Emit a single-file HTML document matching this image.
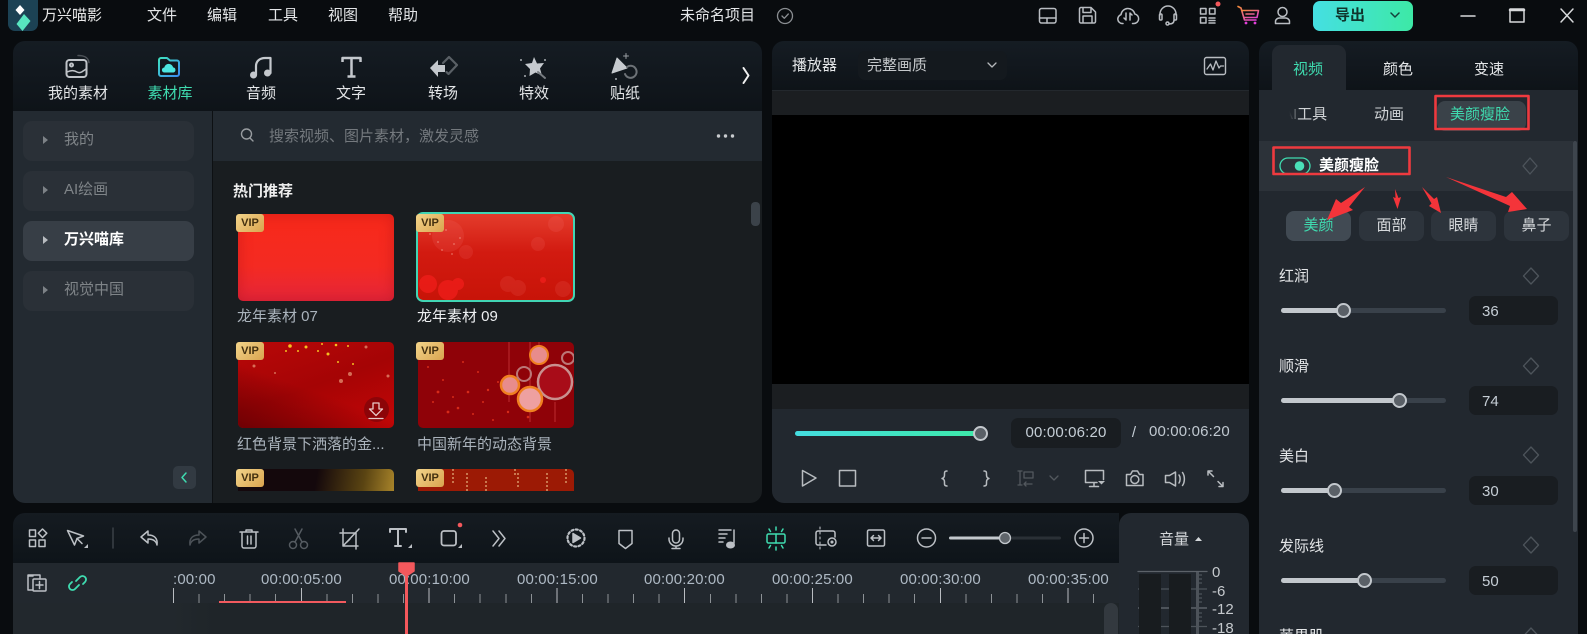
<!DOCTYPE html>
<html lang="zh"><head><meta charset="utf-8"><title>万兴喵影</title>
<style>
*{box-sizing:border-box;margin:0;padding:0}
html{width:1587px;height:634px;overflow:hidden;background:#090c0f}
body{position:relative;width:1587px;height:634px;overflow:hidden;background:#090c0f;font-family:"Liberation Sans","Noto Sans CJK SC",sans-serif;color:#e4e6e8;font-size:15px}
.b{position:absolute}
.l,.c{position:absolute;white-space:nowrap;line-height:20px;height:20px;margin-top:-10px}
.c{transform:translateX(-50%)}
.g{color:#7f8488}.w{color:#fff;font-weight:700}.tl{color:#3fdcb0}
.nav{background:linear-gradient(#151c23,#0e1318)}
.side{left:23px;width:171px;height:40px;border-radius:9px;background:#2a3037}
.tri{position:absolute;width:0;height:0;border-left:5px solid #7d8287;border-top:4px solid transparent;border-bottom:4px solid transparent;margin-top:-4px}
.vip{position:absolute;width:28px;height:18px;border-radius:3px;background:linear-gradient(135deg,#f3d48a,#d9a44f);color:#43300f;font:700 11px/18px "Liberation Sans",sans-serif;text-align:center}
.th{position:absolute;border-radius:5px;overflow:hidden}
.pill{position:absolute;top:211px;height:30px;width:65px;border-radius:8px;background:#2d343c;text-align:center;line-height:30px;color:#d5d8db}
.inp{position:absolute;left:1469px;width:89px;height:29px;border-radius:7px;background:#191d21;color:#c6ced6;line-height:31px;padding-left:13px}
.tr{position:absolute;left:1281px;width:165px;height:5px;border-radius:3px;background:#39414a}
.fill{position:absolute;left:1281px;height:5px;border-radius:3px;background:#c3c8cd}
.kn{position:absolute;width:15px;height:15px;border-radius:50%;background:#5a6067;border:2.5px solid #c3c8cd}
.ru{position:absolute;top:570px;line-height:20px;color:#aeb9c4;white-space:nowrap;letter-spacing:.15px}
</style></head><body>

<!-- Logo -->
<div class="b" style="left:8px;top:0;width:30px;height:31px;border-radius:0 0 7px 7px;background:#1c4254"></div>
<div class="l" style="left:42px;top:16px;color:#e8e8e8">万兴喵影</div>
<div class="l" style="left:147px;top:16px">文件</div>
<div class="l" style="left:207px;top:16px">编辑</div>
<div class="l" style="left:268px;top:16px">工具</div>
<div class="l" style="left:328px;top:16px">视图</div>
<div class="l" style="left:388px;top:16px">帮助</div>
<div class="l" style="left:680px;top:16px">未命名项目</div>

<!-- Export -->
<div class="b" style="left:1313px;top:1px;width:100px;height:30px;border-radius:7px;background:linear-gradient(90deg,#45dfe2,#3de9a6)"></div>
<div class="l" style="left:1335px;top:16px;color:#10352c;font-weight:700">导出</div>

<!-- Library panel -->
<div class="b nav" style="left:13px;top:41px;width:749px;height:70px;border-radius:12px 12px 0 0"></div>
<div class="b" style="left:13px;top:111px;width:199px;height:392px;background:#232a31;border-radius:0 0 0 12px"></div>
<div class="b" style="left:212px;top:111px;width:1px;height:392px;background:#0d1013"></div>
<div class="b" style="left:213px;top:111px;width:549px;height:50px;background:#232a31"></div>
<div class="b" style="left:213px;top:161px;width:549px;height:342px;background:#191d20;border-radius:0 0 12px 0"></div>

<div class="c" style="left:78px;top:94px">我的素材</div>
<div class="c tl" style="left:170px;top:94px">素材库</div>
<div class="c" style="left:261px;top:94px">音频</div>
<div class="c" style="left:351px;top:94px">文字</div>
<div class="c" style="left:443px;top:94px">转场</div>
<div class="c" style="left:534px;top:94px">特效</div>
<div class="c" style="left:625px;top:94px">贴纸</div>

<div class="b side" style="top:121px"></div><div class="tri" style="left:43px;top:140px"></div><div class="l g" style="left:64px;top:140px">我的</div>
<div class="b side" style="top:171px"></div><div class="tri" style="left:43px;top:190px"></div><div class="l g" style="left:64px;top:190px">AI绘画</div>
<div class="b side" style="top:221px;background:#373e46"></div><div class="tri" style="left:43px;top:240px;border-left-color:#b8bcc0"></div><div class="l w" style="left:64px;top:240px">万兴喵库</div>
<div class="b side" style="top:271px"></div><div class="tri" style="left:43px;top:290px"></div><div class="l g" style="left:64px;top:290px">视觉中国</div>
<div class="b" style="left:173px;top:466px;width:23px;height:23px;border-radius:5px;background:#323a42"></div>

<div class="l g" style="left:269px;top:137px;color:#74797e">搜索视频、图片素材，激发灵感</div>
<div class="l w" style="left:233px;top:192px;color:#eee">热门推荐</div>
<div class="b" style="left:751px;top:202px;width:9px;height:24px;border-radius:4px;background:#3b4249"></div>

<!-- Thumbs -->
<div class="th" style="left:238px;top:214px;width:156px;height:87px;background:linear-gradient(#f7291a,#f42a22 60%,#e5263a);box-shadow:inset 0 0 14px rgba(150,10,20,.35)"></div>
<div class="th" style="left:416px;top:212px;width:159px;height:90px;border:2px solid #41d5b4;border-radius:7px;background:linear-gradient(#e43c2c,#d21a10 45%,#c81408)">
<svg width="155" height="86"><g fill="#f88" opacity=".12"><circle cx="30" cy="22" r="16"/><circle cx="90" cy="70" r="8"/><circle cx="100" cy="74" r="8"/><circle cx="145" cy="75" r="8"/><circle cx="48" cy="38" r="7"/><circle cx="138" cy="10" r="8"/><circle cx="120" cy="30" r="7"/></g><g fill="#f22" opacity=".55"><circle cx="10" cy="70" r="9"/><circle cx="30" cy="76" r="10"/><circle cx="40" cy="70" r="6"/><circle cx="125" cy="66" r="3"/></g><g fill="#f9b8a8" opacity=".4"><circle cx="12" cy="20" r="1"/><circle cx="20" cy="28" r="1"/><circle cx="28" cy="16" r="1"/><circle cx="36" cy="30" r="1"/><circle cx="24" cy="36" r="1"/><circle cx="16" cy="12" r="1"/><circle cx="34" cy="40" r="1"/><circle cx="42" cy="24" r="1"/></g></svg></div>
<div class="th" style="left:238px;top:342px;width:156px;height:86px;background:linear-gradient(160deg,#b80808,#a50405 50%,#c40606 100%)">
<div style="position:absolute;inset:0;background:linear-gradient(20deg,#6e0004 0%,transparent 45%)"></div>
<svg width="156" height="86" style="position:absolute;left:0;top:0"><g fill="#f5c020"><circle cx="52" cy="4" r="1.8"/><circle cx="68" cy="5" r="1.5"/><circle cx="48" cy="9" r="1"/><circle cx="84" cy="2" r="1"/><circle cx="98" cy="3" r="1.3"/><circle cx="90" cy="12" r="1.500"/><circle cx="110" cy="4" r="1"/><circle cx="60" cy="9" r="1"/><circle cx="80" cy="9" r="1"/><circle cx="115" cy="22" r="1"/><circle cx="100" cy="20" r="1"/></g><g fill="#e99a7a" opacity=".7"><circle cx="128" cy="5" r="1.5"/><circle cx="112" cy="32" r="2"/><circle cx="103" cy="39" r="2"/><circle cx="150" cy="34" r="1.5"/><circle cx="16" cy="24" r="1.5"/><circle cx="37" cy="31" r="1"/></g></svg></div>
<div class="th" style="left:418px;top:342px;width:156px;height:86px;background:#8f0208">
<svg width="156" height="86"><g fill="#e8361e" opacity=".8"><circle cx="20" cy="50" r="1.4"/><circle cx="50" cy="50" r="1.300"/><circle cx="70" cy="48" r="1.200"/><circle cx="30" cy="70" r="1.400"/><circle cx="90" cy="70" r="1.200"/><circle cx="60" cy="30" r="1"/><circle cx="10" cy="25" r="1"/><circle cx="40" cy="66" r="1.300"/><circle cx="110" cy="75" r="1.300"/><circle cx="75" cy="78" r="1"/><circle cx="15" cy="60" r="1"/><circle cx="35" cy="55" r="1"/><circle cx="55" cy="72" r="1"/><circle cx="65" cy="60" r="1"/><circle cx="80" cy="40" r="1"/><circle cx="25" cy="38" r="1"/><circle cx="45" cy="20" r="1"/></g>
<g fill="none"><path d="M91 0V60M112 0V80M121 0V22M137 60V80" stroke="#e55" stroke-width="1" opacity=".5"/><circle cx="137" cy="40" r="17" fill="#a80c18" stroke="#c9908f" stroke-width="2.500"/><circle cx="92" cy="43" r="9" fill="#e88c8c" stroke="#f08020" stroke-width="2.500"/><circle cx="112" cy="57" r="12" fill="#eea0a0" stroke="#f08020" stroke-width="2.500"/><circle cx="121" cy="13" r="9" fill="#e88c8c" stroke="#f08020" stroke-width="2"/><circle cx="106" cy="32" r="7" stroke="#b77" stroke-width="2"/><circle cx="150" cy="16" r="6" stroke="#b77" stroke-width="2"/></g></svg></div>
<div class="th" style="left:238px;top:469px;width:156px;height:22px;border-radius:5px 5px 0 0;background:linear-gradient(100deg,#14080c 50%,#5a4412 80%,#a8842a)"></div>
<div class="th" style="left:418px;top:469px;width:156px;height:22px;border-radius:5px 5px 0 0;background:#9c1a05"><svg width="156" height="22"><g stroke="#dda070" stroke-width="2" stroke-dasharray="2 2" opacity=".7"><path d="M35 0V16M49 4V22M68 8V22M97 0V6M100 4V20M129 4V22M148 0V14"/></g></svg></div>
<div class="vip" style="left:236px;top:214px">VIP</div>
<div class="vip" style="left:416px;top:214px">VIP</div>
<div class="vip" style="left:236px;top:342px">VIP</div>
<div class="vip" style="left:416px;top:342px">VIP</div>
<div class="vip" style="left:236px;top:469px">VIP</div>
<div class="vip" style="left:416px;top:469px">VIP</div>
<div class="b" style="left:364px;top:397px;width:25px;height:25px;border-radius:50%;background:#8c0408"></div>
<div class="l" style="left:237px;top:317px;color:#aab3bc">龙年素材 07</div>
<div class="l" style="left:417px;top:317px;color:#eef0f2">龙年素材 09</div>
<div class="l" style="left:237px;top:445px;color:#aab3bc">红色背景下洒落的金...</div>
<div class="l" style="left:417px;top:445px;color:#aab3bc">中国新年的动态背景</div>

<!-- Player -->
<div class="b nav" style="left:772px;top:41px;width:477px;height:49px;border-radius:12px 12px 0 0"></div>
<div class="b" style="left:772px;top:90px;width:477px;height:25px;background:#1b1e21;border-top:1px solid #23282d"></div>
<div class="b" style="left:772px;top:115px;width:477px;height:269px;background:#000"></div>
<div class="b" style="left:772px;top:384px;width:477px;height:25px;background:#1b1e21"></div>
<div class="b" style="left:772px;top:409px;width:477px;height:94px;background:#22282f;border-radius:0 0 12px 12px"></div>
<div class="l" style="left:792px;top:66px">播放器</div>
<div class="b" style="left:858px;top:51px;width:149px;height:29px;border-radius:7px;background:#14191e"></div>
<div class="l" style="left:867px;top:66px;color:#c5c8cb">完整画质</div>
<div class="b" style="left:795px;top:431px;width:186px;height:5px;border-radius:3px;background:linear-gradient(90deg,#45dde0,#3de9a8)"></div>
<div class="kn" style="left:973px;top:426px"></div>
<div class="b" style="left:1011px;top:418px;width:110px;height:30px;border-radius:7px;background:#191d21"></div>
<div class="c" style="left:1066px;top:433px;color:#c5ced6;letter-spacing:.15px">00:00:06:20</div>
<div class="c" style="left:1134px;top:433px;color:#c5ced6">/</div>
<div class="l" style="left:1149px;top:432px;color:#c0c8d0;letter-spacing:.15px">00:00:06:20</div>

<!-- Right panel -->
<div class="b nav" style="left:1259px;top:41px;width:319px;height:49px;border-radius:12px 12px 0 0"></div>
<div class="b" style="left:1272px;top:45px;width:74px;height:45px;border-radius:9px 9px 0 0;background:#22282f"></div>
<div class="b" style="left:1259px;top:90px;width:319px;height:544px;background:#22282f"></div>
<div class="c tl" style="left:1308px;top:70px">视频</div>
<div class="c" style="left:1398px;top:70px">颜色</div>
<div class="c" style="left:1489px;top:70px">变速</div>
<div class="l" style="left:1283px;top:115px;color:#cfd2d5">AI工具</div>
<div class="b" style="left:1280px;top:105px;width:17px;height:20px;background:linear-gradient(90deg,#22282f,#22282f 55%,rgba(34,40,47,.55))"></div>
<div class="c" style="left:1389px;top:115px;color:#cfd2d5">动画</div>
<div class="b" style="left:1437px;top:101px;width:89px;height:30px;border-radius:8px;background:#3a4249"></div>
<div class="c tl" style="left:1480px;top:115px">美颜瘦脸</div>
<div class="b" style="left:1259px;top:141px;width:314px;height:50px;background:#2c3239"></div>
<div class="b" style="left:1573px;top:141px;width:4px;height:391px;border-radius:2px;background:#3e454d"></div>
<div class="l w" style="left:1319px;top:166px">美颜瘦脸</div>
<div class="pill" style="left:1286px;background:#414a53;color:#3fdcb0">美颜</div>
<div class="pill" style="left:1359px">面部</div>
<div class="pill" style="left:1431px">眼睛</div>
<div class="pill" style="left:1504px">鼻子</div>

<div class="l" style="left:1279px;top:277px">红润</div>
<div class="tr" style="top:308px"></div><div class="fill" style="top:308px;width:62px"></div><div class="kn" style="left:1336px;top:303px"></div>
<div class="inp" style="top:296px">36</div>
<div class="l" style="left:1279px;top:367px">顺滑</div>
<div class="tr" style="top:398px"></div><div class="fill" style="top:398px;width:118px"></div><div class="kn" style="left:1392px;top:393px"></div>
<div class="inp" style="top:386px">74</div>
<div class="l" style="left:1279px;top:457px">美白</div>
<div class="tr" style="top:488px"></div><div class="fill" style="top:488px;width:53px"></div><div class="kn" style="left:1327px;top:483px"></div>
<div class="inp" style="top:476px">30</div>
<div class="l" style="left:1279px;top:547px">发际线</div>
<div class="tr" style="top:578px"></div><div class="fill" style="top:578px;width:83px"></div><div class="kn" style="left:1357px;top:573px"></div>
<div class="inp" style="top:566px">50</div>
<div class="l" style="left:1279px;top:637px">苹果肌</div>

<!-- Timeline -->
<div class="b" style="left:13px;top:513px;width:1106px;height:50px;background:linear-gradient(#151b21,#0e1419);border-radius:12px 0 0 0"></div>
<div class="b" style="left:13px;top:563px;width:1106px;height:40px;background:#22282e"></div>
<div class="b" style="left:13px;top:603px;width:1106px;height:31px;background:linear-gradient(90deg,#22282d 0,#22282d 160px,#1f2529 200px)"></div>
<div class="b" style="left:173px;top:594px;width:945px;height:9px;background:repeating-linear-gradient(90deg,#8d9296 0,#8d9296 1px,transparent 1px,transparent 25.56px)"></div>
<div class="b" style="left:173px;top:588px;width:945px;height:15px;background:repeating-linear-gradient(90deg,#b9bdc1 0,#b9bdc1 1px,transparent 1px,transparent 127.8px)"></div>
<div class="b" style="left:219px;top:601px;width:127px;height:2px;background:#f25a5e"></div>
<div class="ru" style="left:173px">:00:00</div>
<div class="ru" style="left:261px">00:00:05:00</div>
<div class="ru" style="left:389px">00:00:10:00</div>
<div class="ru" style="left:517px">00:00:15:00</div>
<div class="ru" style="left:644px">00:00:20:00</div>
<div class="ru" style="left:772px">00:00:25:00</div>
<div class="ru" style="left:900px">00:00:30:00</div>
<div class="ru" style="left:1028px">00:00:35:00</div>
<div class="b" style="left:1104px;top:603px;width:14px;height:31px;border-radius:7px 7px 0 0;background:#33393f"></div>
<div class="b" style="left:405px;top:563px;width:3px;height:71px;background:#f4585c"></div>
<!-- Audio -->
<div class="b" style="left:1119px;top:513px;width:130px;height:121px;background:#22282f;border-radius:12px 12px 0 0"></div>
<div class="l" style="left:1159px;top:540px;color:#d5d8db">音量</div>
<div class="b" style="left:1139px;top:574px;width:22px;height:60px;background:#181c1f"></div>
<div class="b" style="left:1169px;top:574px;width:22px;height:60px;background:#181c1f"></div>
<div class="b" style="left:1196px;top:571px;width:3px;height:63px;background:#4d535a"></div>
<div class="l" style="left:1212px;top:573px;color:#c5c9cd">0</div>
<div class="l" style="left:1212px;top:592px;color:#c5c9cd">-6</div>
<div class="l" style="left:1212px;top:610px;color:#c5c9cd">-12</div>
<div class="l" style="left:1212px;top:629px;color:#c5c9cd">-18</div>

<!-- Icon & annotation layer -->
<svg class="b" style="left:0;top:0" width="1587" height="634" viewBox="0 0 1587 634" fill="none" stroke-linecap="round" stroke-linejoin="round">
<defs>
<linearGradient id="fg" x1="0" y1="0" x2="1" y2="1"><stop offset="0" stop-color="#3fe0c0"/><stop offset="1" stop-color="#3b8cf0"/></linearGradient>
<linearGradient id="cg" x1="0" y1="0" x2="1" y2="1"><stop offset="0" stop-color="#f28a3c"/><stop offset="1" stop-color="#e040d8"/></linearGradient>
</defs>
<!-- logo -->
<path d="M20 5l4.500 5-4.500 5-4.500-5z" fill="#fff"/><path d="M24 14l6.500 7-8 10-6-7z" fill="#58e5c0"/>
<!-- check -->
<g stroke="#8a8e92" stroke-width="1.300"><circle cx="785" cy="16" r="7.500"/><path d="M782 16l2.300 2.300 4-4.300"/></g>
<!-- top right -->
<g stroke="#b9bdc2" stroke-width="1.500">
<rect x="1039.500" y="8.500" width="16.500" height="14.500" rx="2"/><path d="M1039.500 18h16.500M1047 18v5"/>
<path d="M1079.500 9a1.500 1.500 0 0 1 1.500-1.500h10l4.500 4.500v9.500a1.500 1.500 0 0 1-1.500 1.500h-13a1.500 1.500 0 0 1-1.500-1.500zM1083 7.500v5h8v-5M1083 23v-7h9v7"/>
<path d="M1123 23.500h-1a4.500 4.500 0 0 1-1-8.800 7 7 0 0 1 13.800-.700 4.800 4.800 0 0 1-.8 9.500h-1.500M1126 13v7l-2-2M1130 20v-7l2 2"/>
<path d="M1160 15v-1a8 8 0 0 1 16 0v1M1174 20c0 3-2 4-5 4"/><circle cx="1167.500" cy="23.500" r="1.500"/><rect x="1159.500" y="14" width="2.500" height="6" rx="1"/><rect x="1174" y="14" width="2.500" height="6" rx="1"/>
<rect x="1200.500" y="8.500" width="5.500" height="5.500"/><rect x="1209.500" y="8.500" width="5.500" height="5.500"/><rect x="1200.500" y="17.500" width="5.500" height="5.500"/><path d="M1209 18h6M1209 20.500h6M1209 23h6"/>
<circle cx="1282.500" cy="12" r="4.500"/><path d="M1275.500 23.500v-2c0-2 2-3.500 4-3.500h6c2 0 4 1.500 4 3.500v2z"/>
</g>
<circle cx="1218" cy="4" r="2.500" fill="#f4585c"/>
<g stroke="url(#cg)" stroke-width="1.600"><path d="M1238 6.500l3 1.500 3.500 12h11.500"/><path d="M1242 10.500h16.500l-1.500 7h-13M1246 14h8"/></g><circle cx="1246" cy="23" r="1.400" fill="#e040d8"/><circle cx="1255" cy="23" r="1.400" fill="#e040d8"/>
<path d="M1391 13l4 4 4-4" stroke="#15403a" stroke-width="1.500"/>
<g stroke="#d8dadc" stroke-width="1.500"><path d="M1461 16h14"/><rect x="1510" y="9" width="14" height="13"/><path d="M1510 10h14" stroke-width="2.500"/><path d="M1561 9l12 13M1573 9l-12 13"/></g>

<!-- Library icons -->
<g stroke="#bfc3c8" stroke-width="2">
<path d="M78 55.500c5 0 10 1 11 7" stroke="#4c5157" stroke-width="1.500"/>
<rect x="66.500" y="60" width="20" height="17" rx="3"/><circle cx="71.500" cy="65" r="1.500"/><path d="M67 72c4-2 7-2 10 0 3 1.500 5 0 9-3" stroke-width="1.500"/>
</g>
<path d="M159 60a2 2 0 0 1 2-2h6l3 2.500h7a2 2 0 0 1 2 2V74a2 2 0 0 1-2 2h-16a2 2 0 0 1-2-2z" stroke="url(#fg)" stroke-width="2"/>
<path d="M164.500 72.500a2.500 2.500 0 0 1-.2-5 4.500 4.500 0 0 1 8.800-.1 2.600 2.600 0 0 1 .4 5.100z" fill="#4ce6e0"/>
<g fill="#c4c8cd"><circle cx="253.500" cy="75" r="3.500"/><circle cx="267.500" cy="73" r="3.500"/></g>
<path d="M256 75V66c0-5 4-8 9-8h5.500V73" stroke="#c4c8cd" stroke-width="2.200"/>
<g stroke="#c4c8cd" stroke-width="2.500"><path d="M342.500 62v-4h18v4M351.500 58v18M347.500 76.500h8" stroke-linecap="butt"/></g>
<path d="M430 68l8-8v5h7v7h-7v5z" fill="#c4c8cd"/>
<path d="M443 63l6-6 8 8-8.500 9-2-2" stroke="#5a6066" stroke-width="2.200"/>
<path d="M534 57l3 6.500 7-.5-4 5.500 2 7-6.500-3-6 3.500.5-7-5-5 7-1z" fill="#c6cacf"/><path d="M538 72l7 6" stroke="#767b80" stroke-width="2"/>
<g fill="#a8adb2"><circle cx="521" cy="60" r="1"/><circle cx="545" cy="60" r="1"/><circle cx="525" cy="76" r="1"/></g>
<path d="M617 58l-5 15 15-5z" fill="#c6cacf" stroke="#c6cacf" stroke-width="1"/><path d="M627 67a6 6 0 1 1-2 7" stroke="#6d7277" stroke-width="2"/><path d="M626 53.500v5M623.500 56h5" stroke="#9a9ea3" stroke-width="1"/><circle cx="616" cy="79" r="1" fill="#a8adb2"/>
<path d="M743.500 68l5 7.500-5 7.500" stroke="#f0f0f0" stroke-width="2"/>
<!-- search/dots/collapse -->
<circle cx="246.500" cy="134" r="5" stroke="#989ca0" stroke-width="1.400"/><path d="M250 138l3 3" stroke="#989ca0" stroke-width="1.400"/>
<g fill="#c8cbce"><circle cx="718.500" cy="136" r="1.700"/><circle cx="725.500" cy="136" r="1.700"/><circle cx="732.500" cy="136" r="1.700"/></g>
<path d="M186 473l-4 4.500 4 4.500" stroke="#3fdcb0" stroke-width="1.500"/>
<!-- download -->
<path d="M373 403h6v6h3.500l-6.500 6.500-6.500-6.500h3.500zM369 418.500h14" stroke="#e8c8c8" stroke-width="1.300"/>
<!-- player header -->
<path d="M988 63l4 4 4-4" stroke="#b5b8bb" stroke-width="1.300"/>
<rect x="1204.500" y="57.500" width="21" height="17" rx="2" stroke="#b9bdc2" stroke-width="1.400"/><path d="M1207 69l3.500-5 2.500 6 3-9 3 7 1.500-2h3" stroke="#b9bdc2" stroke-width="1.300"/>
<!-- player controls -->
<g stroke="#b8bcc0" stroke-width="1.500">
<path d="M802.500 470.500l13.500 7.500-13.500 8z"/><rect x="839.500" y="470.500" width="16" height="15.500"/>
<path d="M947 471c-3 0-2.500 2-2.500 4s-.5 3-2.500 3.500c2 .5 2.500 1.500 2.500 3.500s-.5 4 2.500 4M984 471c3 0 2.500 2 2.500 4s.5 3 2.500 3.500c-2 .5-2.500 1.500-2.500 3.500s.5 4-2.500 4"/>
<path d="M1097 482.500h-11.500v-12h18v9"/><path d="M1094 483v3.500M1089.500 486.500h9"/>
<path d="M1126.500 474.500h4l2-3.500h5l2 3.500h3.500v11h-16.500z"/><circle cx="1134.800" cy="479.500" r="4"/>
<path d="M1165.500 475.500v7h4l6 3.500v-14l-6 3.500zM1179 475c1.500 2 1.500 5.500 0 8M1182.500 472.500c2.500 3.500 2.500 9.500 0 13"/>
<path d="M1208 471l5.500 5.500M1218 481.500l5 5M1208 471v4M1208 471h4M1223 486.500v-4M1223 486.500h-4"/>
</g>
<path d="M1098 481h7l-3.500 3.500z" fill="#b8bcc0"/>
<g stroke="#53585e" stroke-width="1.300"><path d="M1018 471h4M1020 471v14M1018 485h4M1024 484h8M1024 484l2-2M1024 484l2 2"/><rect x="1024" y="472" width="9" height="6"/><path d="M1050 476l4 4 4-4"/></g>
<!-- right panel -->
<rect x="1280" y="158" width="30" height="16" rx="8" stroke="#3fdcb0" stroke-width="1.300"/><circle cx="1299.500" cy="166" r="4.800" fill="#4ae0b8"/>
<g stroke="#4d545b" stroke-width="1.300">
<path d="M1530 158l7 8-7 8-7-8zM1531 268l7.500 8-7.500 8-7.500-8zM1531 358l7.500 8-7.500 8-7.500-8zM1531 447l7.500 8-7.500 8-7.500-8zM1531 537l7.500 8-7.500 8-7.500-8zM1531 628l7.500 8-7.500 8-7.500-8z"/></g>
<!-- timeline toolbar -->
<g stroke="#bcc0c5" stroke-width="1.500">
<rect x="29.500" y="530" width="6" height="6.500"/><path d="M42.500 529l4.300 4.200-4.300 4.300-4.200-4.300z"/><rect x="29.500" y="540" width="6" height="6.500"/><rect x="39" y="540" width="6" height="6.500"/>
<path d="M67.500 530.500l16 5.500-6.500 2.500-2.500 6.500z"/><path d="M77 538.500l5 5"/>
<path d="M113 528v20" stroke="#3a4047"/>
<path d="M148 531l-7 6 7 6v-4c4 0 8 1 9 6 1-7-3-10-9-10z"/>
<path d="M199 531l7 6-7 6v-4c-4 0-8 1-9 6-1-7 3-10 9-10z" stroke="#4c5258"/>
<path d="M240 532h18M246 532v-2h6v2M242 532v14a2 2 0 0 0 2 2h10a2 2 0 0 0 2-2v-14M247.500 536v8M251 536v8"/>
<g stroke="#555b61"><circle cx="293" cy="545" r="3.500"/><circle cx="304" cy="545" r="3.500"/><path d="M295 542l7-13M302 542l-7-13"/></g>
<path d="M343 529v17h15M340 533h16v16M359 529l-16 17M350 539l-3 3"/>
<path d="M390 532v-3h16v3M398 529v17M395 546h6" stroke-width="2"/>
<rect x="441.500" y="531" width="14.500" height="14.500" rx="2.500" stroke-width="1.800"/>
<path d="M493 531l6 7.500-6 7.500M499 531l6 7.500-6 7.500"/>
<circle cx="576" cy="538" r="8.500" stroke-width="2.200" stroke-dasharray="2 2.400"/><path d="M573 533.500l7.500 4.500-7.500 4.500z" fill="#bcc0c5"/>
<path d="M619 530.500h13v13l-6.500 5-6.500-5z"/>
<rect x="672.500" y="530" width="7" height="13" rx="3.500"/><path d="M669 538v1a7 7 0 0 0 14 0v-1M676 546v2M672 548.500h8"/>
<path d="M719 530h12M719 534h8M719 538h6M719 542h4M734 530v13"/>
</g>
<circle cx="460" cy="525" r="2.300" fill="#f4585c"/>
<ellipse cx="730.500" cy="545" rx="4.500" ry="3.500" fill="#bcc0c5"/>
<g fill="#bcc0c5"><path d="M88 548h-4l4-4zM462 548h-4l4-4zM412 548h-4l4-4z"/></g>
<g stroke="#3fdcb0" stroke-width="1.500"><rect x="767" y="534" width="18" height="9" rx="1.500"/><path d="M776 534v9M776 527v3M776 547v3M769 529l1.500 2.500M783 529l-1.500 2.500M769 548l1.500-2.500M783 548l-1.500-2.500"/></g>
<g stroke="#bcc0c5" stroke-width="1.500">
<path d="M835 537v-4a2 2 0 0 0-2-2h-15a2 2 0 0 0-2 2v10a2 2 0 0 0 2 2h8"/><path d="M820 527v24" stroke-dasharray="2 3" stroke-width="1.100"/><circle cx="832" cy="542" r="4"/><circle cx="832" cy="542" r=".8"/>
<rect x="867.500" y="530" width="17" height="16" rx="1.500"/><path d="M871 538h10M871 538l2.500-2.500M871 538l2.500 2.500M881 538l-2.500-2.500M881 538l-2.500 2.500"/>
<circle cx="926.500" cy="538" r="9"/><path d="M922 538h9"/>
<circle cx="1084" cy="538" r="9"/><path d="M1079.500 538h9M1084 533.500v9"/>
</g>
<rect x="1009" y="536.500" width="52" height="3" rx="1.500" fill="#2a3036"/><rect x="949" y="536.500" width="56" height="3" rx="1.500" fill="#c3c8cd"/><circle cx="1005" cy="538" r="5.500" fill="#5f656b" stroke="#c3c8cd" stroke-width="1.300"/>
<!-- timeline left -->
<g stroke="#bcc0c5" stroke-width="1.500"><path d="M33 576h-4a1 1 0 0 0-1 1v13h5"/><path d="M28 576v-1h12v4"/><rect x="33" y="579" width="13" height="12" rx="1"/><path d="M36 585h7M39.500 581.500v7"/></g>
<g stroke="#3fdcb0" stroke-width="1.800"><path d="M76 581l4-4a3.500 3.500 0 0 1 5 5l-2 2M79 585l-4 4a3.500 3.500 0 0 1-5-5l2-2"/></g>
<path d="M399 563h15v8l-7.500 5-7.500-5z" fill="#f4585c" stroke="#f4585c" stroke-width="1.500"/>
<!-- audio -->
<path d="M1195 541l3.500-4 3.500 4z" fill="#d5d8db"/>
<path d="M1138 571.500h69" stroke="#5c6269" stroke-width="1.300"/>
<g stroke="#4d535a" stroke-width="1.300" stroke-linecap="butt"><path d="M1138 589h1M1161 589h8M1191 589h16M1138 626.500h1M1161 626.500h8M1191 626.500h16M1199 575h3M1199 579h3M1199 583h3M1199 594h3M1199 598h3M1199 602h3M1199 613h3M1199 617h3M1199 621h3"/><path d="M1138 608h1M1161 608h8M1191 608h16" stroke-width="2"/></g>
<!-- red annotation boxes -->
<rect x="1435.500" y="96" width="93" height="33" stroke="#ee3a3f" stroke-width="2.600"/>
<rect x="1273.500" y="147.500" width="136" height="26.500" stroke="#ee3a3f" stroke-width="2.600"/>
<!-- arrows -->
<g fill="#f4343a">
<path d="M1365 187L1349 207L1353 210L1327 220L1336 199L1341 203z"/>
<path d="M1395 189l3.500 9 2.500-1-3.500 12-4.500-12 2.500 1z"/>
<path d="M1422 187l12 12 3-2 4 16-12-7 2.500-2.500z"/>
<path d="M1446 177L1506 197L1512 192L1527 209L1508 212L1510 206z"/>
</g>
</svg>
</body></html>
